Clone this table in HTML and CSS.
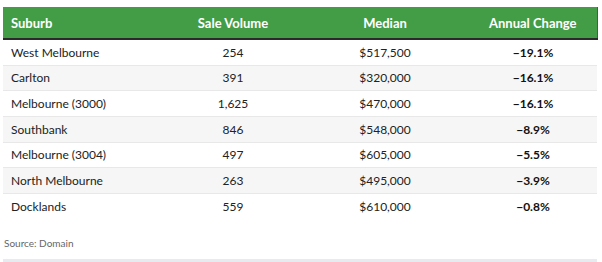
FILE: index.html
```html
<!DOCTYPE html>
<html>
<head>
<meta charset="utf-8">
<link rel="stylesheet" href="styles.css">
</head>
<body>
<div class="wrap">
  <table class="tbl">
    <colgroup>
      <col class="c1"><col class="c2"><col class="c3"><col class="c4">
    </colgroup>
    <thead>
      <tr><th class="left">Suburb</th><th>Sale Volume</th><th>Median</th><th>Annual Change</th></tr>
    </thead>
    <tbody>
      <tr><td class="left">West Melbourne</td><td>254</td><td>$517,500</td><td class="chg">−19.1%</td></tr>
      <tr><td class="left">Carlton</td><td>391</td><td>$320,000</td><td class="chg">−16.1%</td></tr>
      <tr><td class="left">Melbourne (3000)</td><td>1,625</td><td>$470,000</td><td class="chg">−16.1%</td></tr>
      <tr><td class="left">Southbank</td><td>846</td><td>$548,000</td><td class="chg">−8.9%</td></tr>
      <tr><td class="left">Melbourne (3004)</td><td>497</td><td>$605,000</td><td class="chg">−5.5%</td></tr>
      <tr><td class="left">North Melbourne</td><td>263</td><td>$495,000</td><td class="chg">−3.9%</td></tr>
      <tr><td class="left">Docklands</td><td>559</td><td>$610,000</td><td class="chg">−0.8%</td></tr>
    </tbody>
  </table>
  <div class="source">Source: Domain</div>
  <div class="rule"></div>
</div>
</body>
</html>
```
FILE: styles.css
```css
html, body { margin: 0; padding: 0; background: #fff; }
body { font-family: "Lato", "Noto Sans", sans-serif; color: #222; }
.wrap { padding: 7px 5px 0 3px; }
.tbl { width: 594px; border-collapse: collapse; table-layout: fixed; font-size: 12px; }
.c1 { width: 162px; }
.c2 { width: 136px; }
.c3 { width: 168px; }
.c4 { width: 128px; }
thead th {
  background: #439d47;
  color: #fff;
  font-weight: 700;
  font-size: 13px;
  height: 31px;
  padding: 0;
  text-align: center;
  border-bottom: 2px solid #2a2a2a;
}
thead th:last-child { border-right: 1px solid #2f6b32; }
th.left, td.left { text-align: left; padding-left: 8px; }
tbody td {
  height: 24.67px;
  padding: 0;
  text-align: center;
  border-bottom: 1px solid #e8e8e8;
  color: #222;
}
tbody tr:nth-child(even) td { background: #f6f6f6; }
tbody tr:last-child td { border-bottom: none; }
td.chg { font-weight: 700; color: #111; }
.source { font-size: 10px; color: #666; margin-top: 18px; padding-left: 1px; }
.rule { height: 3px; background: #e7eaee; margin-top: 10px; }
```
